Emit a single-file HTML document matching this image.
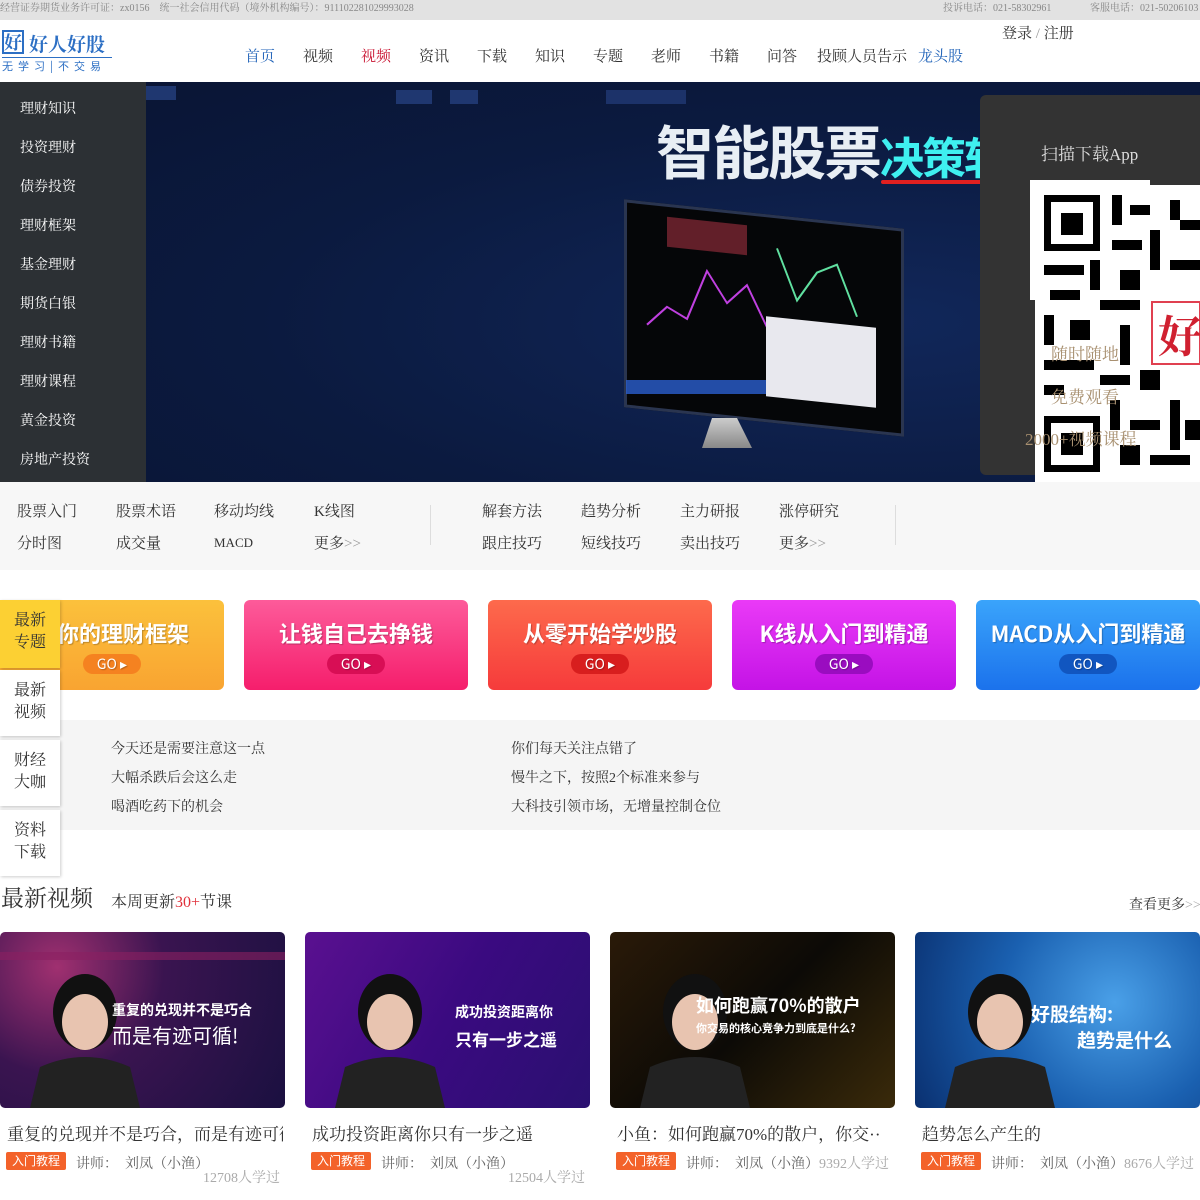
<!DOCTYPE html>
<html><head><meta charset="utf-8"><style>
*{margin:0;padding:0;box-sizing:border-box}
body{width:1200px;height:1200px;overflow:hidden;background:#fff;font-family:"Liberation Serif","Noto Serif CJK SC","Noto Sans CJK SC",serif;position:relative;color:#333}
.a{position:absolute;white-space:nowrap}
.top{left:0;top:0;width:1200px;height:20px;background:#e2e2e2;font-size:10px;color:#888;line-height:16px}
.nav{top:45px;font-size:15px;color:#333}
.menu{left:0;top:82px;width:146px;height:400px;background:#2c3034}
.menu div{position:absolute;left:20px;color:#fff;font-size:14px}
.ban{left:146px;top:82px;width:1054px;height:400px;background:radial-gradient(ellipse at 70% 60%,#11275a,#0b1a3f 60%,#0a1535)}
.cat{font-size:15px;color:#333}
.card{top:600px;width:224px;height:90px;border-radius:6px;color:#fff;font-family:"Noto Sans CJK SC",sans-serif;font-weight:bold;font-size:22px;text-align:center;padding-top:16px;line-height:34px;text-shadow:1px 1px 1px rgba(0,0,0,.25)}
.go{display:block;margin:4px auto 0;width:58px;height:20px;border-radius:10px;font-size:14px;font-weight:normal;line-height:20px}
.tab{left:0;width:60px;height:66px;background:#fff;font-size:16px;color:#333;text-align:center;padding-top:10px;line-height:22px;box-shadow:1px 1px 3px rgba(0,0,0,.2)}
.news{font-size:14px;color:#333}
.vid{top:932px;width:285px;height:176px;border-radius:5px;overflow:hidden}
.vt{top:1120px;font-size:17px;color:#333}
.tag{top:1152px;height:18px;background:#f3622a;color:#fff;font-size:12px;padding:0 6px;line-height:18px;border-radius:2px;font-family:"Noto Sans CJK SC",sans-serif}
.lec{top:1153px;font-size:14px;color:#666}
.cnt{font-size:14px;color:#aaa}
.h{position:absolute;left:0;right:0;height:200px;}
.face{position:absolute;left:30px;top:30px;width:110px;height:146px}
.vtx{position:absolute;color:#fff;font-family:"Noto Sans CJK SC",sans-serif;font-weight:bold}
</style></head><body>
<div class="a top"><span style="position:absolute;left:0;top:1px">经营证券期货业务许可证：zx0156　统一社会信用代码（境外机构编号）：911102281029993028</span><span style="position:absolute;left:943px;top:1px">投诉电话：021-58302961</span><span style="position:absolute;left:1090px;top:1px">客服电话：021-50206103</span></div>

<div class="a" style="left:2px;top:30px;width:22px;height:24px;border:2px solid #2c6fc4;color:#2c6fc4;font-size:18px;font-weight:bold;line-height:20px;text-align:center;font-family:'Noto Serif CJK SC',serif">好</div>
<div class="a" style="left:29px;top:30px;font-size:19px;color:#2c6fc4;font-weight:bold;font-family:'Noto Serif CJK SC',serif">好人好股</div>
<div class="a" style="left:2px;top:57px;width:110px;border-top:1px solid #2c6fc4;font-size:11px;color:#2c6fc4;letter-spacing:5px;font-family:'Noto Sans CJK SC',sans-serif">无学习|不交易</div>

<div class="a nav" style="left:245px;color:#1f62b8">首页</div>
<div class="a nav" style="left:303px">视频</div>
<div class="a nav" style="left:361px;color:#c8102e">视频</div>
<div class="a nav" style="left:419px">资讯</div>
<div class="a nav" style="left:477px">下载</div>
<div class="a nav" style="left:535px">知识</div>
<div class="a nav" style="left:593px">专题</div>
<div class="a nav" style="left:651px">老师</div>
<div class="a nav" style="left:709px">书籍</div>
<div class="a nav" style="left:767px">问答</div>
<div class="a nav" style="left:817px">投顾人员告示</div>
<div class="a nav" style="left:918px;color:#1f62b8">龙头股</div>
<div class="a" style="left:1002px;top:22px;font-size:15px;color:#333">登录 <span style="color:#999">/</span> 注册</div>

<div class="a ban">
<div class="a" style="left:250px;top:8px;width:36px;height:14px;background:#1f3770"></div>
<div class="a" style="left:304px;top:8px;width:28px;height:14px;background:#1f3770"></div>
<div class="a" style="left:460px;top:8px;width:80px;height:14px;background:#1c3269"></div>
<div class="a" style="left:0;top:4px;width:30px;height:14px;background:#1f3770"></div>
<div class="a" style="left:510px;top:32px;font-size:58px;font-weight:bold;color:#e8eef4;font-family:'Noto Sans CJK SC',sans-serif;letter-spacing:-2px;line-height:70px">智能股票<span style="color:#3ff0f0;font-size:44px">决策软</span></div>
<div class="a" style="left:735px;top:98px;width:110px;height:4px;background:#e02020;border-radius:2px"></div>
<div class="a" style="left:478px;top:132px;width:280px;height:208px;background:#050608;border:3px solid #2a3550;transform:skewY(6deg);overflow:hidden">
<svg width="280" height="208" style="position:absolute;left:0;top:0"><path d="M20 120 L40 100 L60 110 L80 60 L100 90 L120 70 L140 110" stroke="#c040e0" fill="none" stroke-width="2"/><path d="M150 30 L170 80 L190 50 L210 40 L230 90" stroke="#60e0a0" fill="none" stroke-width="2"/><rect x="40" y="10" width="80" height="30" fill="#a03040" opacity=".6"/></svg>
</div>
<div class="a" style="left:620px;top:240px;width:110px;height:80px;background:#e8e8ee;transform:skewY(6deg)"></div>
<div class="a" style="left:480px;top:298px;width:140px;height:14px;background:#2b5fd0;opacity:.8"></div>
<div class="a" style="left:556px;top:336px;width:50px;height:30px;background:linear-gradient(#ccc,#888);clip-path:polygon(20% 0,70% 0,100% 100%,0 100%)"></div>
</div>
<div class="a menu">
<div style="top:16px">理财知识</div><div style="top:55px">投资理财</div><div style="top:94px">债券投资</div><div style="top:133px">理财框架</div><div style="top:172px">基金理财</div><div style="top:211px">期货白银</div><div style="top:250px">理财书籍</div><div style="top:289px">理财课程</div><div style="top:328px">黄金投资</div><div style="top:367px">房地产投资</div>
</div>

<div class="a" style="left:980px;top:95px;width:240px;height:380px;background:#333;border-radius:6px"></div>
<div class="a" style="left:1041px;top:140px;font-size:17px;color:#ddd">扫描下载App</div>
<svg class="a" style="left:1030px;top:180px" width="170" height="302" viewBox="0 0 170 302">
<rect x="0" y="0" width="120" height="120" fill="#fff"/><rect x="5" y="5" width="165" height="297" fill="#fff"/>
<rect x="14" y="15" width="56" height="56" fill="#000"/><rect x="21" y="22" width="42" height="42" fill="#fff"/><rect x="31" y="33" width="22" height="22" fill="#000"/>
<rect x="14" y="236" width="56" height="56" fill="#000"/><rect x="21" y="243" width="42" height="42" fill="#fff"/><rect x="31" y="253" width="22" height="22" fill="#000"/>
<g fill="#000">
<rect x="82" y="15" width="10" height="30"/><rect x="100" y="25" width="20" height="10"/><rect x="140" y="20" width="10" height="20"/><rect x="150" y="40" width="20" height="10"/><rect x="82" y="60" width="30" height="10"/><rect x="120" y="50" width="10" height="40"/><rect x="14" y="85" width="40" height="10"/><rect x="60" y="80" width="10" height="30"/><rect x="90" y="90" width="20" height="20"/><rect x="140" y="80" width="30" height="10"/><rect x="20" y="110" width="30" height="10"/><rect x="70" y="120" width="40" height="10"/><rect x="14" y="135" width="10" height="30"/><rect x="40" y="140" width="20" height="20"/><rect x="90" y="145" width="10" height="40"/><rect x="14" y="180" width="50" height="10"/><rect x="70" y="195" width="30" height="10"/><rect x="110" y="190" width="20" height="20"/><rect x="14" y="205" width="20" height="10"/><rect x="80" y="220" width="10" height="30"/><rect x="100" y="240" width="30" height="10"/><rect x="140" y="220" width="10" height="50"/><rect x="90" y="265" width="20" height="20"/><rect x="120" y="275" width="40" height="10"/><rect x="155" y="240" width="15" height="20"/>
</g>
<rect x="122" y="122" width="48" height="62" fill="#fff" stroke="#e04050" stroke-width="2"/>
<text x="128" y="172" font-size="44" fill="#d02030" font-family="Noto Serif CJK SC,serif" font-weight="bold">好</text>
</svg>
<div class="a" style="left:1051px;top:340px;font-size:17px;color:#a89070">随时随地</div>
<div class="a" style="left:1051px;top:383px;font-size:17px;color:#a89070">免费观看</div>
<div class="a" style="left:1025px;top:425px;font-size:17px;color:#a89070">2000+视频课程</div>

<div class="a" style="left:0;top:482px;width:1200px;height:88px;background:#f7f7f7"></div>
<div class="a cat" style="left:17px;top:500px">股票入门</div><div class="a cat" style="left:116px;top:500px">股票术语</div><div class="a cat" style="left:214px;top:500px">移动均线</div><div class="a cat" style="left:314px;top:500px">K线图</div>
<div class="a cat" style="left:17px;top:532px">分时图</div><div class="a cat" style="left:116px;top:532px">成交量</div><div class="a cat" style="left:214px;font-size:13px;top:535px">MACD</div><div class="a cat" style="left:314px;top:532px">更多<span style="color:#999">&gt;&gt;</span></div>
<div class="a" style="left:430px;top:505px;width:1px;height:40px;background:#ddd"></div>
<div class="a cat" style="left:482px;top:500px">解套方法</div><div class="a cat" style="left:581px;top:500px">趋势分析</div><div class="a cat" style="left:680px;top:500px">主力研报</div><div class="a cat" style="left:779px;top:500px">涨停研究</div>
<div class="a cat" style="left:482px;top:532px">跟庄技巧</div><div class="a cat" style="left:581px;top:532px">短线技巧</div><div class="a cat" style="left:680px;top:532px">卖出技巧</div><div class="a cat" style="left:779px;top:532px">更多<span style="color:#999">&gt;&gt;</span></div>
<div class="a" style="left:895px;top:505px;width:1px;height:40px;background:#ddd"></div>

<div class="a card" style="left:0;background:linear-gradient(#fbc13c,#f9a431)">建你的理财框架<span class="go" style="background:#f58220">GO ▸</span></div>
<div class="a card" style="left:244px;background:linear-gradient(#fd5b9a,#f51e6c)">让钱自己去挣钱<span class="go" style="background:#d80e55">GO ▸</span></div>
<div class="a card" style="left:488px;background:linear-gradient(#fd6a4c,#f63b3b)">从零开始学炒股<span class="go" style="background:#d81e1e">GO ▸</span></div>
<div class="a card" style="left:732px;background:linear-gradient(#ea3af7,#c413e6)">K线从入门到精通<span class="go" style="background:#9a0cc0">GO ▸</span></div>
<div class="a card" style="left:976px;background:linear-gradient(#3aa4fb,#1b72ec)">MACD从入门到精通<span class="go" style="background:#1156c0">GO ▸</span></div>

<div class="a" style="left:0;top:720px;width:1200px;height:110px;background:#f5f5f5"></div>
<div class="a tab" style="top:600px;background:#fcd033;height:68px">最新<br>专题</div>
<div class="a tab" style="top:670px">最新<br>视频</div>
<div class="a tab" style="top:740px">财经<br>大咖</div>
<div class="a tab" style="top:810px">资料<br>下载</div>
<div class="a news" style="left:111px;top:738px">今天还是需要注意这一点</div>
<div class="a news" style="left:111px;top:767px">大幅杀跌后会这么走</div>
<div class="a news" style="left:111px;top:796px">喝酒吃药下的机会</div>
<div class="a news" style="left:511px;top:738px">你们每天关注点错了</div>
<div class="a news" style="left:511px;top:767px">慢牛之下，按照2个标准来参与</div>
<div class="a news" style="left:511px;top:796px">大科技引领市场，无增量控制仓位</div>

<div class="a" style="left:1px;top:880px;font-size:23px;color:#333">最新视频</div>
<div class="a" style="left:111px;top:889px;font-size:16px;color:#333">本周更新<span style="color:#e0303a">30+</span>节课</div>
<div class="a" style="left:1129px;top:894px;font-size:14px;color:#333">查看更多<span style="color:#aaa">&gt;&gt;</span></div>

<div class="a vid" style="left:0;background:radial-gradient(circle at 20% 20%,#a03070,#3a1450 40%,#1a1040)">
<div class="h" style="top:20px;height:8px;background:#8a2060;opacity:.6"></div>
<svg class="face" viewBox="0 0 110 146"><ellipse cx="55" cy="50" rx="32" ry="38" fill="#111"/><ellipse cx="55" cy="60" rx="23" ry="28" fill="#e8c4b0"/><path d="M0 146 L10 105 Q55 85 100 105 L110 146Z" fill="#222"/></svg>
<div class="vtx" style="left:112px;top:68px;font-size:14px">重复的兑现并不是巧合</div>
<div class="vtx" style="left:112px;top:88px;font-size:20px;font-weight:normal">而是有迹可循!</div></div>
<div class="a vid" style="left:305px;background:linear-gradient(120deg,#5a1090,#3a0a80 50%,#2a1070)">
<svg class="face" viewBox="0 0 110 146"><ellipse cx="55" cy="50" rx="32" ry="38" fill="#111"/><ellipse cx="55" cy="60" rx="23" ry="28" fill="#e8c4b0"/><path d="M0 146 L10 105 Q55 85 100 105 L110 146Z" fill="#222"/></svg>
<div class="vtx" style="left:150px;top:70px;font-size:14px">成功投资距离你</div>
<div class="vtx" style="left:150px;top:94px;font-size:17px">只有一步之遥</div></div>
<div class="a vid" style="left:610px;background:linear-gradient(135deg,#2a1a08,#0c0a06 50%,#3a2a0a)">
<svg class="face" viewBox="0 0 110 146"><ellipse cx="55" cy="50" rx="32" ry="38" fill="#111"/><ellipse cx="55" cy="60" rx="23" ry="28" fill="#e8c4b0"/><path d="M0 146 L10 105 Q55 85 100 105 L110 146Z" fill="#222"/></svg>
<div class="vtx" style="left:86px;top:60px;font-size:18px">如何跑赢70%的散户</div>
<div class="vtx" style="left:86px;top:88px;font-size:11px">你交易的核心竞争力到底是什么?</div></div>
<div class="a vid" style="left:915px;background:radial-gradient(circle at 70% 40%,#4aa0e8,#1a60b0 50%,#0a3070)">
<svg class="face" viewBox="0 0 110 146"><ellipse cx="55" cy="50" rx="32" ry="38" fill="#111"/><ellipse cx="55" cy="60" rx="23" ry="28" fill="#e8c4b0"/><path d="M0 146 L10 105 Q55 85 100 105 L110 146Z" fill="#222"/></svg>
<div class="vtx" style="left:116px;top:68px;font-size:19px">好股结构:</div>
<div class="vtx" style="left:162px;top:94px;font-size:19px">趋势是什么</div></div>

<div class="a vt" style="left:7px;width:276px;overflow:hidden">重复的兑现并不是巧合，而是有迹可循</div>
<div class="a vt" style="left:312px">成功投资距离你只有一步之遥</div>
<div class="a vt" style="left:617px">小鱼：如何跑赢70%的散户，你交··</div>
<div class="a vt" style="left:922px">趋势怎么产生的</div>

<div class="a tag" style="left:6px">入门教程</div><div class="a lec" style="left:76px">讲师：　刘凤（小渔）</div><div class="a cnt" style="left:203px;top:1167px">12708人学过</div>
<div class="a tag" style="left:311px">入门教程</div><div class="a lec" style="left:381px">讲师：　刘凤（小渔）</div><div class="a cnt" style="left:508px;top:1167px">12504人学过</div>
<div class="a tag" style="left:616px">入门教程</div><div class="a lec" style="left:686px">讲师：　刘凤（小渔）<span class="cnt">9392人学过</span></div>
<div class="a tag" style="left:921px">入门教程</div><div class="a lec" style="left:991px">讲师：　刘凤（小渔）<span class="cnt">8676人学过</span></div>
</body></html>
